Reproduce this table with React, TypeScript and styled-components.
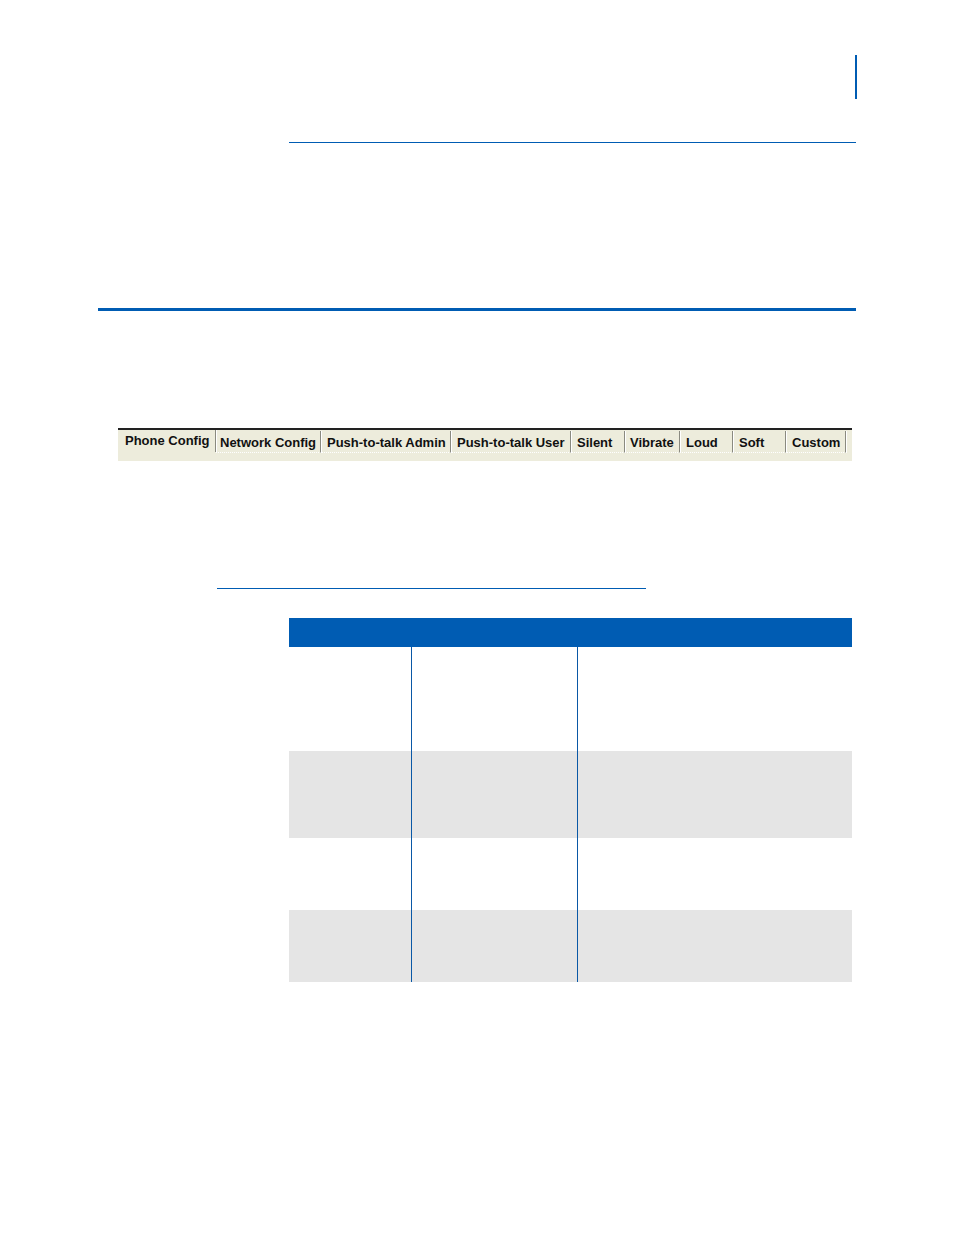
import React from "react";
import styled, { createGlobalStyle } from "styled-components";

const Global = createGlobalStyle`
  html, body { margin: 0; padding: 0; background: #fff; }
  body { font-family: "Liberation Sans", Arial, sans-serif; }
`;

const BLUE = "#005cb3";

const Page = styled.div`
  width: 954px;
  height: 1235px;
  display: flex;
  flex-direction: column;
  background: #fff;
  overflow: hidden;
`;

const HeaderRow = styled.div`
  display: flex;
  justify-content: flex-end;
  padding: 55px 97px 0 0;
`;

const Thumb = styled.div`
  width: 2px;
  height: 44px;
  background: ${BLUE};
`;

const Rule = styled.div<{ $left: number; $width: number; $top: number; $thick?: number }>`
  margin-left: ${(p) => p.$left}px;
  margin-top: ${(p) => p.$top}px;
  width: ${(p) => p.$width}px;
  height: ${(p) => p.$thick ?? 1}px;
  background: ${BLUE};
`;

const TabBar = styled.div`
  margin: 117px 0 0 118px;
  width: 734px;
  height: 31px;
  border-top: 2px solid #222;
  background: #edecdc;
  display: flex;
  align-items: flex-start;
  box-sizing: content-box;
`;

const Tab = styled.div<{ $w: number; $pad: number; $active?: boolean; $sep?: boolean }>`
  width: ${(p) => p.$w}px;
  box-sizing: border-box;
  padding-left: ${(p) => p.$pad}px;
  padding-top: ${(p) => (p.$active ? 3 : 4)}px;
  height: 22px;
  margin-top: ${(p) => (p.$active ? 0 : 1)}px;
  font-family: "Liberation Sans", Arial, sans-serif;
  font-weight: bold;
  font-size: 13px;
  line-height: 15px;
  color: #111;
  white-space: nowrap;
  border-right: ${(p) => (p.$sep ? "1px solid #8a8a80" : "none")};
  box-shadow: ${(p) => (p.$sep ? "1px 0 0 #ffffff" : "none")};
  ${(p) => (p.$active ? "" : `border-bottom: 1px dotted #ffffff;`)}
`;

const Table = styled.div`
  margin: 29px 0 0 289px;
  width: 563px;
  display: flex;
  flex-direction: column;
`;

const THead = styled.div`
  height: 29px;
  background: ${BLUE};
`;

const TRow = styled.div<{ $h: number; $shade?: boolean }>`
  display: grid;
  grid-template-columns: 123px 166px 1fr;
  height: ${(p) => p.$h}px;
  background: ${(p) => (p.$shade ? "#e5e5e5" : "#ffffff")};
`;

const Cell = styled.div<{ $line?: boolean }>`
  border-right: ${(p) => (p.$line ? `1px solid #0a58a6` : "none")};
`;

const tabs = [
  { label: "Phone Config", w: 98, pad: 7, active: true },
  { label: "Network Config", w: 105, pad: 4 },
  { label: "Push-to-talk Admin", w: 130, pad: 6 },
  { label: "Push-to-talk User", w: 120, pad: 6 },
  { label: "Silent", w: 54, pad: 6 },
  { label: "Vibrate", w: 55, pad: 5 },
  { label: "Loud", w: 53, pad: 6 },
  { label: "Soft", w: 53, pad: 6 },
  { label: "Custom", w: 60, pad: 6 },
];

const rows = [
  { h: 104, shade: false },
  { h: 87, shade: true },
  { h: 72, shade: false },
  { h: 72, shade: true },
];

export default function App() {
  return (
    <>
      <Global />
      <Page>
        <HeaderRow>
          <Thumb />
        </HeaderRow>
        <Rule $left={289} $width={567} $top={43} />
        <Rule $left={98} $width={758} $top={165} $thick={3} />
        <TabBar>
          {tabs.map((t) => (
            <Tab key={t.label} $w={t.w} $pad={t.pad} $active={t.active} $sep>
              {t.label}
            </Tab>
          ))}
        </TabBar>
        <Rule $left={217} $width={429} $top={127} />
        <Table>
          <THead />
          {rows.map((r, i) => (
            <TRow key={i} $h={r.h} $shade={r.shade}>
              <Cell $line />
              <Cell $line />
              <Cell />
            </TRow>
          ))}
        </Table>
      </Page>
    </>
  );
}
